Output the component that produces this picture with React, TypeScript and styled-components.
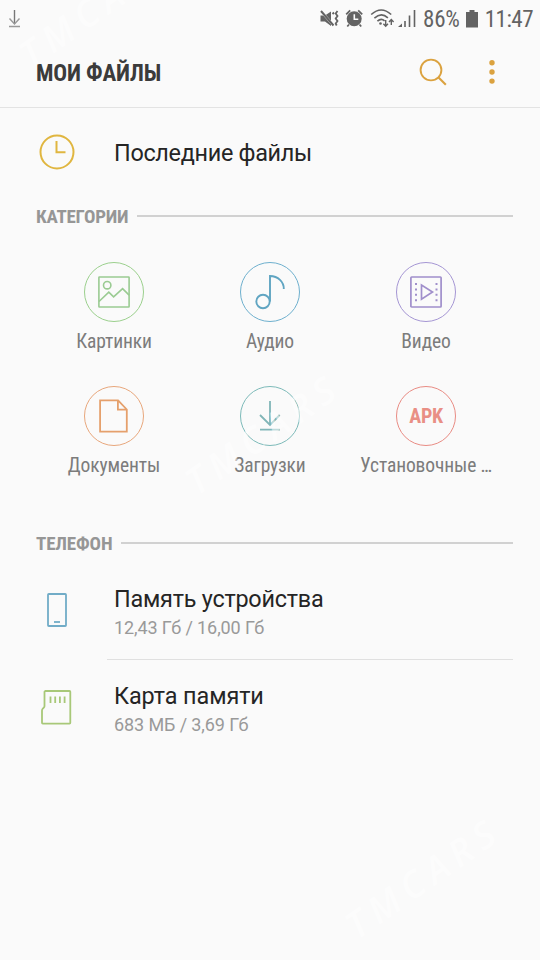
import React from "react";
import styled, { createGlobalStyle } from "styled-components";

const GlobalStyle = createGlobalStyle`
  * { box-sizing: border-box; }
  body { margin: 0; background: #fafafa; font-family: Roboto, sans-serif; }
`;

const Screen = styled.main`
  position: relative;
  display: flex;
  flex-direction: column;
  width: 540px;
  height: 960px;
  overflow: hidden;
  background: #fafafa;
`;

const StatusBar = styled.div`
  display: flex;
  align-items: center;
  justify-content: space-between;
  height: 38px;
  padding: 0 7px 0 7px;
  color: #636363;
`;

const StatusGroup = styled.div`
  display: flex;
  align-items: center;
`;

const Condensed = styled.span<{ $size: number; $weight?: number; $color: string; $track?: number }>`
  font-family: "Roboto Condensed", Roboto, sans-serif;
  font-stretch: 75%;
  font-size: ${(p) => p.$size}px;
  font-weight: ${(p) => p.$weight ?? 400};
  letter-spacing: ${(p) => p.$track ?? 0}px;
  color: ${(p) => p.$color};
  line-height: 28px;
  white-space: nowrap;
`;

const StatusText = styled(Condensed)`
  padding-top: 2px;
`;

const BatteryGap = styled.div`
  display: flex;
  padding: 0 6px 1px 5px;
`;

const Header = styled.header`
  display: flex;
  align-items: center;
  justify-content: space-between;
  height: 70px;
  padding: 0 40px 0 36px;
  border-bottom: 1px solid #e3e3e3;
`;

const HeaderTitle = styled(Condensed)`
  padding-top: 2px;
`;

const Actions = styled.div`
  display: flex;
  align-items: center;
  gap: 37px;
  padding-bottom: 1px;
`;

const Recent = styled.div`
  display: flex;
  align-items: center;
  height: 90px;
  padding-left: 36px;
`;

const IconSlot = styled.div<{ $lift?: number }>`
  display: flex;
  flex: none;
  justify-content: center;
  width: 42px;
  margin-right: 36px;
  padding-bottom: ${(p) => p.$lift ?? 0}px;
`;

const Title = styled.div<{ $track?: number }>`
  font-size: 23.4px;
  line-height: 28px;
  letter-spacing: ${(p) => p.$track ?? 0}px;
  color: #252525;
  white-space: nowrap;
`;

const Section = styled.div`
  display: flex;
  align-items: center;
  height: 36px;
  padding: 0 27px 0 36px;
  gap: 9px;
`;

const SectionTitle = styled(Condensed)`
  padding-top: 2px;
`;

const Rule = styled.div`
  flex: 1;
  height: 2px;
  background: #d1d1d1;
`;

const Grid = styled.div`
  display: grid;
  grid-template-columns: repeat(3, 156px);
  grid-auto-rows: 124px;
  height: 291px;
  padding: 28px 36px 0;
`;

const Category = styled.div`
  display: flex;
  flex-direction: column;
  align-items: center;
  gap: 6px;
`;

const Disc = styled.div<{ $color: string }>`
  display: flex;
  align-items: center;
  justify-content: center;
  width: 60px;
  height: 60px;
  border: 1px solid ${(p) => p.$color};
  border-radius: 50%;
`;

const Storage = styled.div<{ $height: number }>`
  display: flex;
  align-items: center;
  height: ${(p) => p.$height}px;
  padding-left: 36px;
`;

const StorageText = styled.div<{ $drop: number }>`
  padding-top: ${(p) => p.$drop}px;
`;

const Detail = styled.div`
  font-size: 18px;
  line-height: 30px;
  letter-spacing: -0.1px;
  color: #999;
  white-space: nowrap;
`;

const Divider = styled.div`
  height: 1px;
  margin: 0 27px 0 107px;
  background: #e0e0e0;
`;

const Watermark = styled.div<{ $x: number; $y: number }>`
  position: absolute;
  left: ${(p) => p.$x}px;
  top: ${(p) => p.$y}px;
  width: 240px;
  margin: -22px 0 0 -120px;
  font: italic 600 37px/44px "Open Sans", sans-serif;
  letter-spacing: 7.5px;
  text-align: center;
  color: rgba(255, 255, 255, 0.5);
  transform: rotate(-35deg);
  pointer-events: none;
`;

const StatusIcons = () => (
  <svg width="104" height="24" viewBox="320 7 104 24" fill="none" stroke="#636363" strokeWidth="1.7">
    <path d="M321.500 15.500h4.500l6-4v14.500l-6-4.500h-4.500z" fill="#636363" stroke="none" />
    <path d="M321 10l14 16" stroke="#fafafa" strokeWidth="2.6" />
    <path d="M322 11l12.500 14.500" strokeWidth="2" />
    <path d="M335 12.500l-1.500 1.500M338.500 11l-1.800 2.500 1.800 2.500-1.800 2.500 1.800 2.500-1.800 2.500 1 2" strokeWidth="1.800" />
    <circle cx="355.200" cy="18.800" r="7.500" fill="#636363" stroke="none" />
    <path d="M347.200 14.300l4-4M359.200 10.300l4 4M350 24.500l-1.700 2M360.500 24.500l1.700 2" strokeWidth="1.800" />
    <path d="M355.300 14.300v5h4" stroke="#fafafa" strokeWidth="1.600" />
    <path d="M372.200 14.500q10-9 20 0M375.400 18.200q6.800-6.500 13.500-.4M378.400 21.200q3.800-3.500 7.200-.3" strokeWidth="1.600" />
    <circle cx="381.500" cy="23.500" r="1.300" fill="#636363" stroke="none" />
    <path d="M386.700 20v6M384.400 23.800l2.300 2.500 2.300-2.500M392.300 25v-5.500M390 22l2.300-2.500 2.300 2.500" strokeWidth="1.400" />
    <path d="M399 27l4-3.500v3.500z" fill="#636363" stroke="none" />
    <path d="M406 27v-6M410.500 27V15.500M415.500 27V10" strokeWidth="1.600" />
  </svg>
);

const DownloadSmall = () => (
  <svg width="15" height="20" viewBox="0 0 15 20" fill="none" strokeWidth="1.400">
    <path d="M7.500 1v14" stroke="#777" />
    <path d="M2.500 9.500l5 5.500 5-5.500M2 17.500h11" stroke="#999" />
  </svg>
);

const Battery = () => (
  <svg width="14" height="20" viewBox="0 0 14 20" fill="#636363">
    <path d="M4.500 1h5v2H13v15.500H1V3h3.500z" />
  </svg>
);

const Search = () => (
  <svg width="28" height="28" viewBox="0 0 28 28" fill="none" stroke="#dba23f" strokeWidth="1.900">
    <circle cx="12" cy="12" r="10.400" />
    <path d="M19.300 19.300l7.500 7.500" strokeWidth="2.100" />
  </svg>
);

const More = () => (
  <svg width="16" height="28" viewBox="0 0 16 28" fill="#dba23f">
    <circle cx="8" cy="4.800" r="2.700" />
    <circle cx="8" cy="14" r="2.700" />
    <circle cx="8" cy="23.100" r="2.700" />
  </svg>
);

const Clock = () => (
  <svg width="36" height="36" viewBox="0 0 36 36" fill="none" stroke="#e0b640" strokeWidth="2">
    <circle cx="18" cy="18" r="16.500" />
    <path d="M17.500 7v11.200h9" />
  </svg>
);

const Picture = () => (
  <svg width="34" height="34" viewBox="0 0 34 34" fill="none" stroke="#9acb92" strokeWidth="1.600">
    <rect x="1.900" y="2" width="30.200" height="30" rx=".5" />
    <circle cx="10.200" cy="10.200" r="3.700" />
    <path d="M2 26.500l9.800-9.300 4.800 4.700 9-8.300 6.500 6.500" />
  </svg>
);

const Note = () => (
  <svg width="34" height="38" viewBox="0 0 34 38" fill="none" stroke="#60a5c2" strokeWidth="1.900">
    <circle cx="10" cy="28.500" r="6.700" />
    <path d="M17 28.500V3c8 0 14 6 13.800 13" />
  </svg>
);

const Film = () => (
  <svg width="34" height="34" viewBox="0 0 34 34" fill="none" stroke="#a08fcb" strokeWidth="1.700">
    <rect x="1.900" y="2" width="30.200" height="30" rx=".8" />
    <path d="M12.500 10v14.200L23.500 17z" />
    <path d="M7 8v19M27.500 8v19" strokeWidth="2" strokeDasharray="2 3.400" />
  </svg>
);

const Document = () => (
  <svg width="34" height="36" viewBox="0 0 34 36" fill="none" stroke="#e5a06c" strokeWidth="1.800">
    <path d="M3.100 2.300h18l8.700 9.200v22.200H3.100zM20.900 2.300v9.400H29.800" />
  </svg>
);

const Download = () => (
  <svg width="24" height="32" viewBox="0 0 24 32" fill="none" stroke="#80b5b7" strokeWidth="1.800">
    <path d="M12 1v23.500M2 15l10 10 9.700-10M2 29.700h20" />
  </svg>
);

const Phone = () => (
  <svg width="22" height="36" viewBox="0 0 22 36" fill="none" stroke="#71acc7" strokeWidth="1.800">
    <rect x="2" y="2" width="18" height="32" rx=".8" />
    <path d="M8 30h6" />
  </svg>
);

const Card = () => (
  <svg width="34" height="36" viewBox="0 0 34 36" fill="none" stroke="#a8c878" strokeWidth="1.800">
    <path d="M5 2h24.500q.8 0 .8.800v31q0 .8-.8.800H2.800q-.8 0-.8-.8V21.500q0-1 .8-1.800l1-1q.7-.7.700-1.700V2.800q0-.8.800-.8z" />
    <path d="M10.500 7.500V14M15.200 7.500V14M19.900 7.500V14M24.600 7.500V14" />
  </svg>
);

const categories = [
  { label: "Картинки", color: "#9bd08d", icon: <Picture /> },
  { label: "Аудио", color: "#6eb0ce", icon: <Note /> },
  { label: "Видео", color: "#a596d4", icon: <Film /> },
  { label: "Документы", color: "#e8a77c", icon: <Document /> },
  { label: "Загрузки", color: "#7dbab9", icon: <Download /> },
  {
    label: "Установочные …",
    color: "#e98c84",
    icon: <Condensed $size={20} $weight={700} $color="#e98f85" $track={-0.3}>APK</Condensed>,
  },
];

export default function App() {
  return (
    <>
      <GlobalStyle />
      <Screen>
        <StatusBar>
          <DownloadSmall />
          <StatusGroup>
            <StatusIcons />
            <StatusText $size={23} $color="#636363" $track={-0.2}>86%</StatusText>
            <BatteryGap><Battery /></BatteryGap>
            <StatusText $size={23} $color="#636363" $track={-0.5}>11:47</StatusText>
          </StatusGroup>
        </StatusBar>
        <Header>
          <HeaderTitle $size={23} $weight={700} $color="#3b3b3b" $track={-0.15}>МОИ ФАЙЛЫ</HeaderTitle>
          <Actions><Search /><More /></Actions>
        </Header>
        <Recent>
          <IconSlot $lift={2}><Clock /></IconSlot>
          <Title $track={-0.3}>Последние файлы</Title>
        </Recent>
        <Section>
          <SectionTitle $size={19} $weight={700} $color="#969696" $track={-0.25}>КАТЕГОРИИ</SectionTitle>
          <Rule />
        </Section>
        <Grid>
          {categories.map((c) => (
            <Category key={c.label}>
              <Disc $color={c.color}>{c.icon}</Disc>
              <Condensed $size={19.500} $color="#7c7c7c" $track={-0.12}>{c.label}</Condensed>
            </Category>
          ))}
        </Grid>
        <Section>
          <SectionTitle $size={19} $weight={700} $color="#969696" $track={-0.15}>ТЕЛЕФОН</SectionTitle>
          <Rule />
        </Section>
        <Storage $height={98}>
          <IconSlot><Phone /></IconSlot>
          <StorageText $drop={7}>
            <Title $track={-0.23}>Память устройства</Title>
            <Detail>12,43 Гб / 16,00 Гб</Detail>
          </StorageText>
        </Storage>
        <Divider />
        <Storage $height={97}>
          <IconSlot $lift={3}><Card /></IconSlot>
          <StorageText $drop={4}>
            <Title $track={-0.08}>Карта памяти</Title>
            <Detail>683 МБ / 3,69 Гб</Detail>
          </StorageText>
        </Storage>
        <Watermark $x={97} $y={6}>TMCARS</Watermark>
        <Watermark $x={263} $y={433}>TMCARS</Watermark>
        <Watermark $x={423} $y={877}>TMCARS</Watermark>
      </Screen>
    </>
  );
}
